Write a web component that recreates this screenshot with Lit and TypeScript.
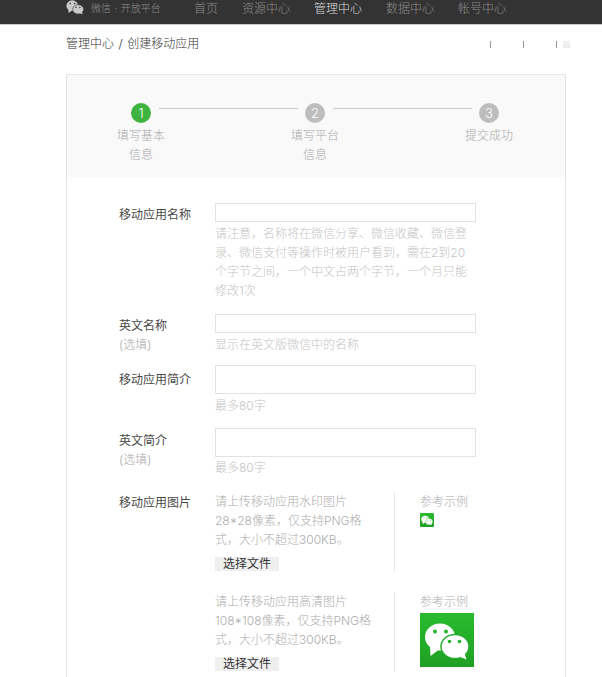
import { LitElement, html, css, svg } from "lit";
import { customElement } from "lit/decorators.js";

const wechat = (size: number, fill: string, holes: string, gap: string, box = "0 0 54 54") => svg`
<svg width="${size}" height="${size}" viewBox="${box}" class="wx">
  <ellipse cx="20" cy="24" rx="15" ry="13.500" fill="${fill}"/>
  <path fill="${fill}" d="M10 33l.5 10 8-6z"/>
  <circle cx="15" cy="18.500" r="2" fill="${holes}"/>
  <circle cx="26" cy="18.500" r="2" fill="${holes}"/>
  <ellipse cx="35" cy="33.500" rx="14" ry="12" fill="${fill}" stroke="${gap}" stroke-width="1.500"/>
  <path fill="${fill}" d="M40 44l6.500 2.500-2-6z"/>
  <circle cx="29.500" cy="28.500" r="1.800" fill="${holes}"/>
  <circle cx="39.500" cy="28.500" r="1.800" fill="${holes}"/>
</svg>`;

@customElement("app-root")
export class AppRoot extends LitElement {
  static styles = css`
    :host {
      display: block;
      height: 677px;
      overflow: hidden;
      background: #fff;
      font-family: "Inter", "Noto Sans CJK SC", "Noto Sans", sans-serif;
      font-size: 12px;
      font-weight: 300;
      color: #222;
    }
    .top {
      height: 24px;
      background: #333;
      border-bottom: 1px solid #c8c8c8;
      display: flex;
      align-items: flex-start;
      padding-left: 66px;
      color: #8d8d8d;
    }
    .logo { display: flex; align-items: center; height: 16px; }
    .brand { font-size: 10px; margin-left: 7px; line-height: 17px; width: 103px; }
    .brand span { margin: 0 3.500px; }
    .nav { display: flex; gap: 24px; line-height: 17px; }
    .nav span.on { color: #ddd; }
    .crumb-row {
      display: flex;
      justify-content: space-between;
      padding: 9px 32px 0 66px;
      height: 40px;
      line-height: 20px;
      color: #333;
    }
    .crumb span { margin: 0 4.500px; }
    .tools { display: flex; align-items: center; height: 20px; }
    .tick { width: 1px; height: 7px; background: #999; margin-left: 32px; }
    .tiny { font-size: 7px; color: #ccc; margin-left: 6px; line-height: 7px; }
    .card {
      margin: 0 36px 0 66px;
      border: 1px solid #e7e7eb;
      height: 700px;
    }
    .steps { background: #f9f9f9; height: 102px; padding-top: 28px; box-sizing: border-box; }
    .track { display: flex; padding-left: 64px; }
    .dot {
      width: 20px; height: 20px; border-radius: 50%;
      background: #bdbdbd; color: #fff;
      text-align: center; line-height: 20px; font-size: 13px;
    }
    .dot.on { background: #3fb33f; }
    .line { width: 139px; height: 1px; background: #c8c8c8; margin: 5px 7px 0 8px; }
    .labels { display: flex; padding-left: 49px; gap: 124px; margin-top: 3px; }
    .labels div { width: 50px; text-align: center; line-height: 19px; color: #a8a8a8; }
    .form { padding: 26px 0 0 52px; }
    .row { display: grid; grid-template-columns: 96px 261px; }
    .lab { line-height: 19px; padding-top: 2px; color: #484848; font-weight: 400; }
    .lab small { display: block; font-size: 12px; color: #a8a8a8; font-weight: 300; }
    .box { box-sizing: border-box; width: 261px; height: 19px; border: 1px solid #e2e2e4; display: block; }
    .box.tall { height: 29px; }
    .hint { line-height: 19px; color: #c4c4c4; margin-top: 2px; }
    .r2 { margin-top: 14px; }
    .r3 { margin-top: 11px; }
    .r3 .lab { padding-top: 5px; }
    .r4 { margin-top: 13px; }
    .r4 .lab { padding-top: 3px; }
    .r4 .hint { margin-top: 1px; }
    .r5 { margin-top: 14px; }
    .uploads { display: flex; flex-direction: column; gap: 20px; padding-top: 1px; }
    .up { display: flex; height: 80px; }
    .up-text { flex: none; width: 170px; margin-right: 9px; line-height: 19px; color: #adadad; }
    .file {
      display: block; width: 64px; height: 14px; margin-top: 8px;
      background: #efefef; color: #333; text-align: center; line-height: 14px;
      border-radius: 1px; font-weight: 400;
    }
    .sample { flex: none; border-left: 1px solid #e7e7eb; padding-left: 25px; line-height: 19px; color: #adadad; height: 80px; width: 60px; }
    .icon { display: block; background: linear-gradient(#29bb2f, #1fa024); }
    .icon.s { width: 14px; height: 14px; margin-top: 2px; border-radius: 1px; }
    .icon.b { width: 54px; height: 54px; margin-top: 2px; }
    .icon svg { display: block; }
  `;

  render() {
    return html`
      <div class="top">
        <div class="logo">${wechat(18, "#c9c9c9", "#333", "#333", "4 9 46 42")}</div>
        <div class="brand">微信<span>·</span>开放平台</div>
        <div class="nav">
          <span>首页</span><span>资源中心</span><span class="on">管理中心</span><span>数据中心</span><span>帐号中心</span>
        </div>
      </div>
      <div class="crumb-row">
        <div class="crumb">管理中心<span>/</span>创建移动应用</div>
        <div class="tools"><i class="tick"></i><i class="tick"></i><i class="tick"></i><span class="tiny">圆</span></div>
      </div>
      <div class="card">
        <div class="steps">
          <div class="track">
            <div class="dot on">1</div><div class="line"></div>
            <div class="dot">2</div><div class="line"></div>
            <div class="dot">3</div>
          </div>
          <div class="labels">
            <div>填写基本信息</div><div>填写平台信息</div><div>提交成功</div>
          </div>
        </div>
        <div class="form">
          <div class="row">
            <div class="lab">移动应用名称</div>
            <div>
              <span class="box"></span>
              <div class="hint">请注意，名称将在微信分享、微信收藏、微信登录、微信支付等操作时被用户看到，需在2到20个字节之间，一个中文占两个字节，一个月只能修改1次</div>
            </div>
          </div>
          <div class="row r2">
            <div class="lab">英文名称<small>(选填)</small></div>
            <div><span class="box"></span><div class="hint">显示在英文版微信中的名称</div></div>
          </div>
          <div class="row r3">
            <div class="lab">移动应用简介</div>
            <div><span class="box tall"></span><div class="hint">最多80字</div></div>
          </div>
          <div class="row r4">
            <div class="lab">英文简介<small>(选填)</small></div>
            <div><span class="box tall"></span><div class="hint">最多80字</div></div>
          </div>
          <div class="row r5">
            <div class="lab">移动应用图片</div>
            <div class="uploads">
              <div class="up">
                <div class="up-text">请上传移动应用水印图片<br />28*28像素，仅支持PNG格式，大小不超过300KB。<span class="file">选择文件</span></div>
                <div class="sample">参考示例<span class="icon s">${wechat(14, "#fff", "#28b32c", "#28b32c")}</span></div>
              </div>
              <div class="up">
                <div class="up-text">请上传移动应用高清图片<br />108*108像素，仅支持PNG格式，大小不超过300KB。<span class="file">选择文件</span></div>
                <div class="sample">参考示例<span class="icon b">${wechat(54, "#fff", "#28b32c", "#25ad2b")}</span></div>
              </div>
            </div>
          </div>
        </div>
      </div>
    `;
  }
}
